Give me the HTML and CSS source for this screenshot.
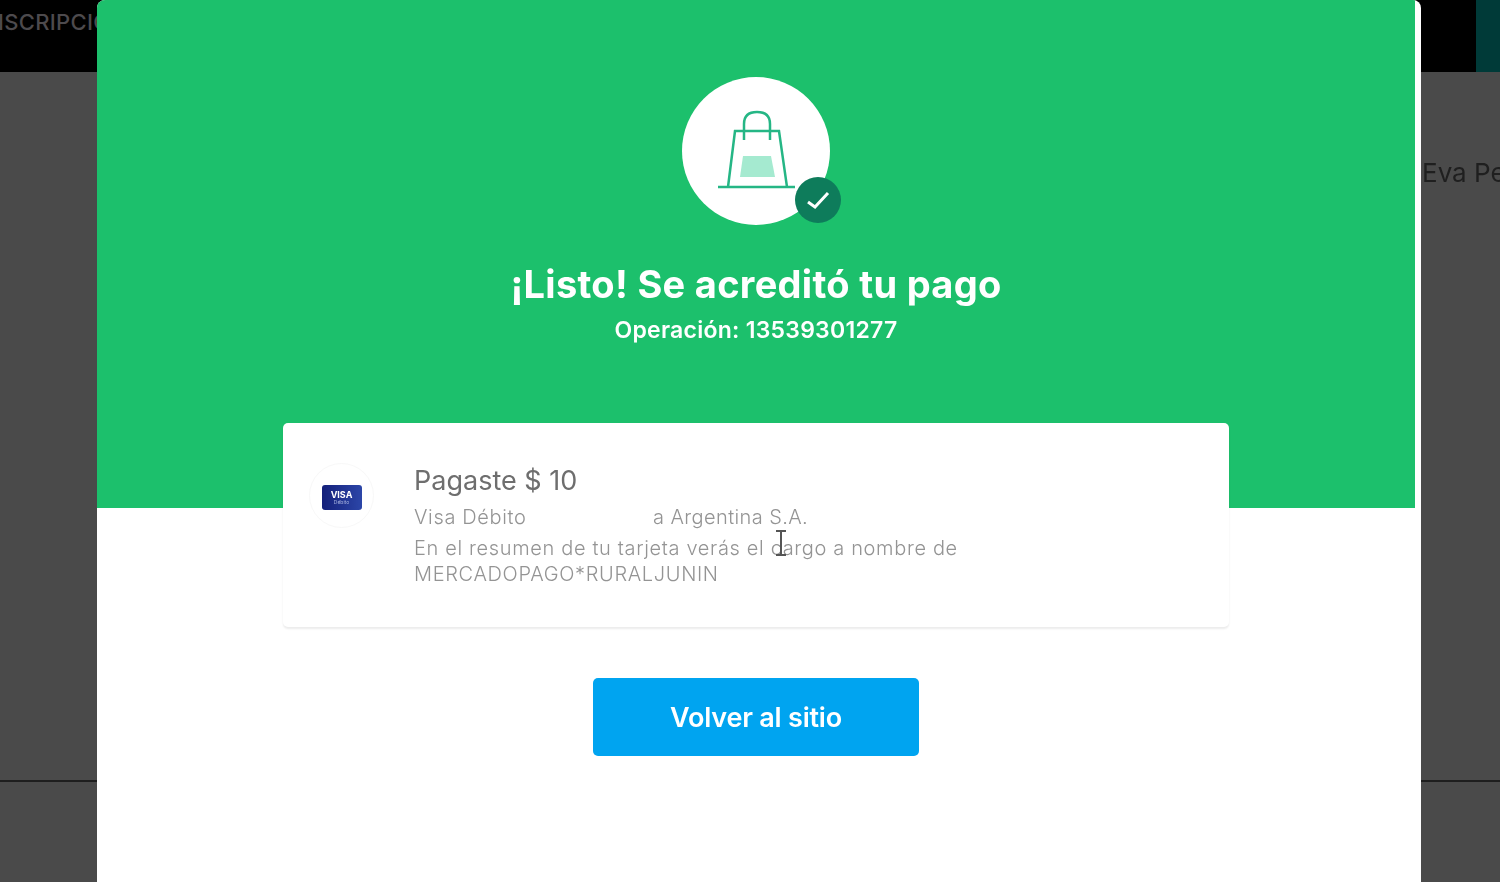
FILE: index.html
```html
<!DOCTYPE html>
<html lang="es">
<head>
<meta charset="UTF-8">
<meta name="viewport" content="width=device-width, initial-scale=1.0">
<title>Pago acreditado</title>
<link rel="stylesheet" href="styles.css">
</head>
<body>
    <header class="topbar">
        <span class="topbar-title">INSCRIPCIÓN</span>
        <span class="topbar-tab"></span>
    </header>
    <main class="backdrop">
        <p class="backdrop-name">Eva Perón</p>
    </main>
    <div class="backdrop-footer"></div>

    <section class="modal">
        <div class="hero">
            <div class="hero-icon">
                <svg class="bag" viewBox="0 0 148 148" width="148" height="148">
                    <path class="bag-fill" d="M60 79H88L92 100H57Z"/>
                    <path class="bag-line" d="M35 110H112M45 110L52 54H96L104 110M61 63V47C61 39 66 35 74 35C82 35 87 39 87 47V63"/>
                </svg>
                <span class="badge">
                    <svg viewBox="0 0 46 46" width="46" height="46">
                        <path d="M13 25L20 30L33 16"/>
                    </svg>
                </span>
            </div>
            <h1>¡Listo! Se acreditó tu pago</h1>
            <p class="operation">Operación: 13539301277</p>
        </div>

        <div class="content">
            <div class="card">
                <div class="method">
                    <div class="visa">
                        <strong>VISA</strong>
                        <small>Débito</small>
                    </div>
                </div>
                <div class="details">
                    <h2>Pagaste $ 10</h2>
                    <p class="issuer"><span class="issuer-type">Visa Débito</span><span class="issuer-name">a Argentina S.A.</span></p>
                    <p class="statement">En el resumen de tu tarjeta verás el cargo a nombre de<br>MERCADOPAGO*RURALJUNIN</p>
                </div>
            </div>
            <button class="back">Volver al sitio</button>
        </div>
    </section>

    <svg class="cursor" viewBox="0 0 12 26" width="12" height="26">
        <path d="M1 1H11M6 1V25M1 25H11"/>
    </svg>
</body>
</html>
```

FILE: styles.css
```css
* {
    box-sizing: border-box;
}
body {
    margin: 0;
    height: 882px;
    overflow: hidden;
    font-family: Inter, Lato, Arial, sans-serif;
    background-color: #4a4a4a;
    filter: blur(0.5px);
}

/* page behind the modal */
.topbar {
    display: flex;
    justify-content: space-between;
    height: 72px;
    background-color: #000;
    overflow: hidden;
}
.topbar-title {
    margin: 8px 0 0 -19px;
    font-size: 22px;
    line-height: 28px;
    font-weight: 500;
    letter-spacing: 0.3px;
    color: #4d4a4d;
}
.topbar-tab {
    width: 24px;
    background-color: #003a38;
}
.backdrop {
    height: 710px;
    padding: 84px 0 0 1422px;
    border-bottom: 2px solid #1e1e1e;
    overflow: hidden;
}
.backdrop-name {
    margin: 0;
    font-size: 26px;
    line-height: 34px;
    white-space: nowrap;
    color: #1f1f1f;
}

/* modal */
.modal {
    position: absolute;
    top: 0;
    left: 97px;
    width: 1324px;
    height: 882px;
    padding-right: 6px;
    background-color: #fff;
    border-radius: 8px 8px 0 0;
    overflow: hidden;
}
.hero {
    display: flex;
    flex-direction: column;
    align-items: center;
    height: 508px;
    padding-top: 77px;
    background-color: #1cc06c;
    color: #fff;
}
.hero-icon {
    position: relative;
    width: 148px;
    height: 148px;
    border-radius: 50%;
    background-color: #fff;
}
.bag {
    display: block;
    margin-left: 1px;
}
.bag-fill {
    fill: #a5ead0;
}
.bag-line {
    fill: none;
    stroke: #25b685;
    stroke-width: 2.5;
}
.badge {
    position: absolute;
    left: 113px;
    top: 100px;
    width: 46px;
    height: 46px;
    border-radius: 50%;
    background-color: #0e7c5b;
}
.badge svg {
    display: block;
}
.badge path {
    fill: none;
    stroke: #fff;
    stroke-width: 3;
}
h1 {
    margin: 35px 0 0;
    font-size: 38px;
    line-height: 48px;
    font-weight: 700;
    letter-spacing: 0.3px;
}
.operation {
    margin: 6px 0 0;
    font-size: 23px;
    line-height: 32px;
    font-weight: 600;
    letter-spacing: 0.25px;
}
.content {
    display: flex;
    flex-direction: column;
    align-items: center;
}
.card {
    display: flex;
    width: 946px;
    height: 204px;
    margin-top: -85px;
    padding: 40px 0 0 26px;
    background-color: #fff;
    border-radius: 5px;
    box-shadow: 0 2px 2px rgba(0, 0, 0, 0.08);
}
.method {
    display: flex;
    align-items: center;
    justify-content: center;
    width: 65px;
    height: 65px;
    border: 1px solid #f8f8f8;
    border-radius: 50%;
}
.visa {
    display: flex;
    flex-direction: column;
    align-items: center;
    width: 40px;
    height: 25px;
    margin-top: 3px;
    padding-top: 5px;
    border-radius: 3px;
    background: linear-gradient(90deg, #14207a, #2c46a8);
    color: #fff;
}
.visa strong {
    font-size: 9px;
    line-height: 9px;
}
.visa small {
    font-size: 5px;
    line-height: 6px;
    color: #a9b4e0;
}
.details {
    margin-left: 40px;
}
h2 {
    margin: 1px 0 0;
    font-size: 27px;
    line-height: 34px;
    font-weight: 400;
    color: #6e6e6e;
}
.issuer {
    margin: 6px 0 0;
    font-size: 20px;
    line-height: 26px;
    font-weight: 300;
    letter-spacing: 0.65px;
    color: #949494;
}
.issuer-type {
    display: inline-block;
    width: 239px;
}
.issuer-name {
    letter-spacing: 0.4px;
}
.statement {
    margin: 5px 0 0;
    font-size: 20px;
    line-height: 26px;
    font-weight: 300;
    letter-spacing: 0.65px;
    color: #949494;
}
.back {
    width: 326px;
    height: 78px;
    margin-top: 51px;
    border: none;
    border-radius: 5px;
    background-color: #00a4f0;
    color: #fff;
    font-family: inherit;
    font-size: 27px;
    font-weight: 600;
    letter-spacing: -0.2px;
}
.cursor {
    position: absolute;
    left: 775px;
    top: 530px;
}
.cursor path {
    fill: none;
    stroke: #555;
    stroke-width: 2;
}
```
